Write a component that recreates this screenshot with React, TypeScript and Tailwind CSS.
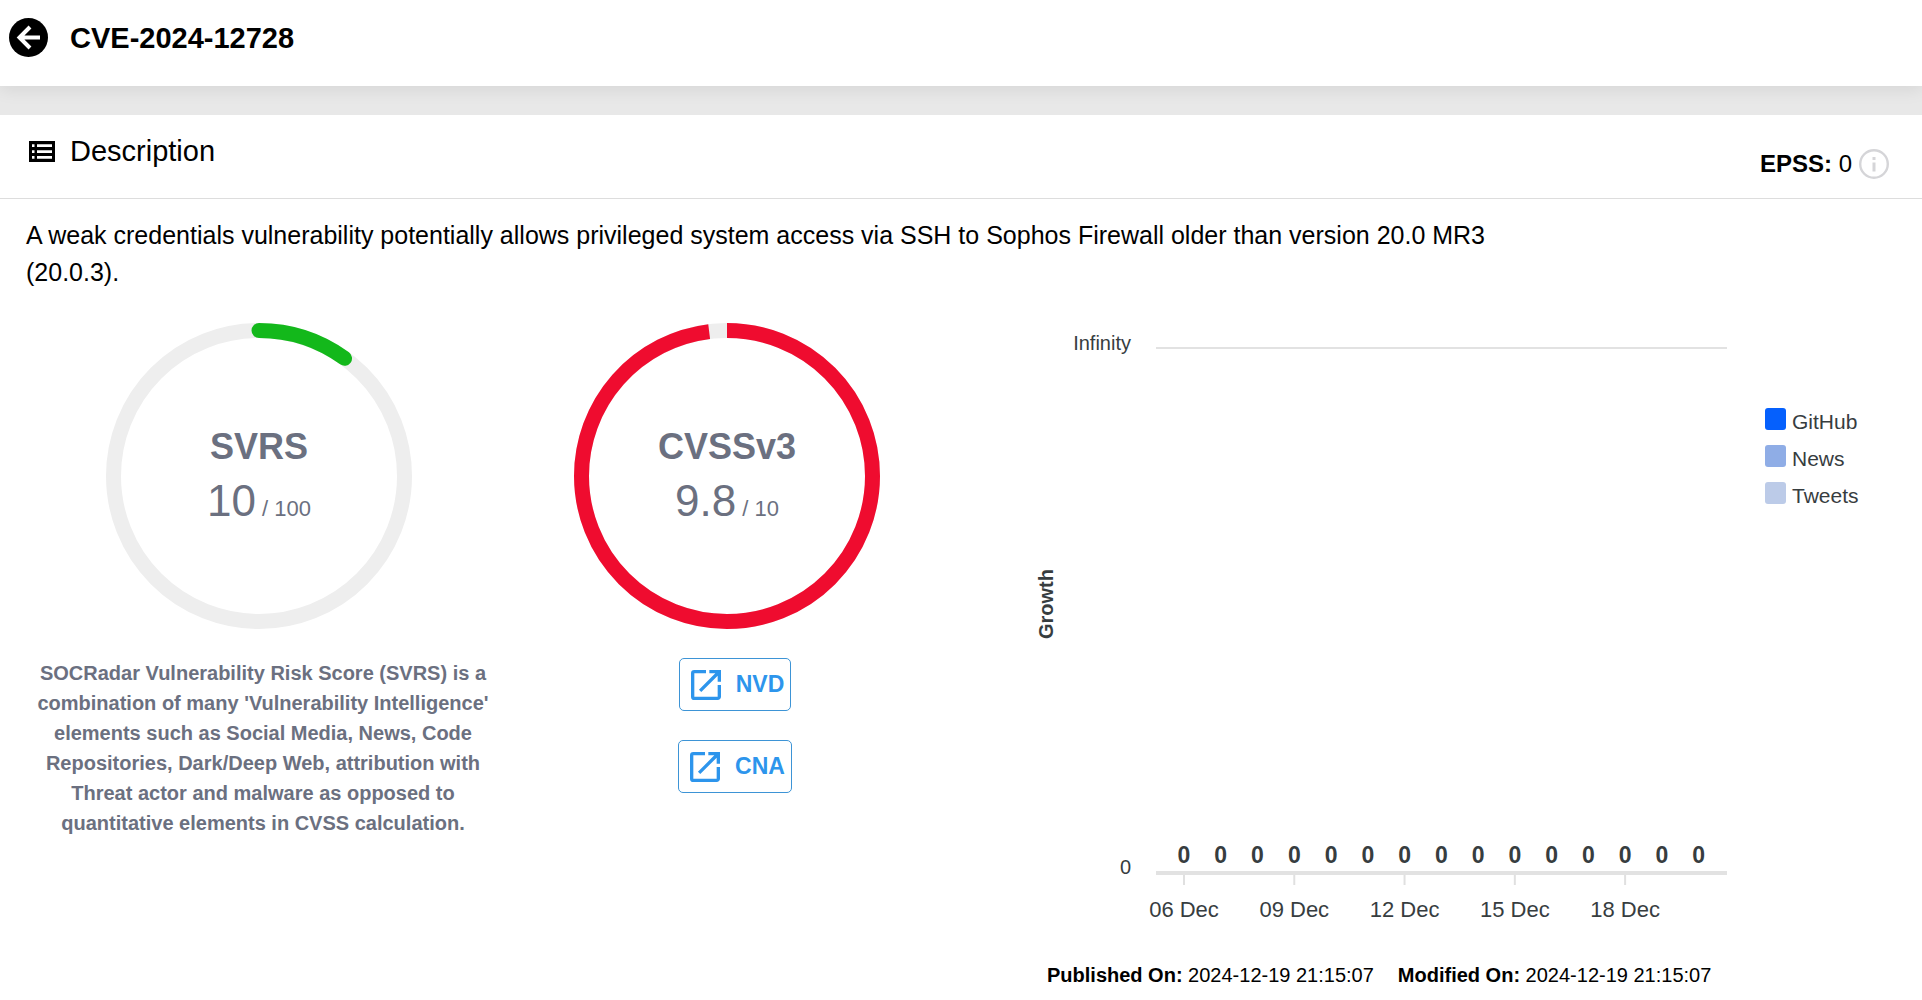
import type { ReactNode } from 'react';

import { MdOpenInNew } from 'react-icons/md';

interface ScoreGaugeProps {
    title: string;
    score: string;
    total: number;
    color: string;
    rounded?: boolean;
}

interface SourceLinkProps {
    href: string;
    children: ReactNode;
}

const RADIUS = 145.5;
const CIRCUMFERENCE = 2 * Math.PI * RADIUS;

const legend = [
    { label: 'GitHub', className: 'bg-[#0560fd]' },
    { label: 'News', className: 'bg-[#8fade6]' },
    { label: 'Tweets', className: 'bg-[#bccbe8]' },
];

const growth = Array.from({ length: 15 }, (_, i) => ({
    day: `${String(i + 6).padStart(2, '0')} Dec`,
    value: 0,
}));

const ScoreGauge = ({ title, score, total, color, rounded }: ScoreGaugeProps) => {
    const filled = (Number(score) / total) * CIRCUMFERENCE;

    return (
        <div className="grid place-items-center">
            <svg
                viewBox="0 0 306 306"
                className="col-start-1 row-start-1 size-[306px]"
                fill="none"
                strokeWidth="15"
            >
                <circle cx="153" cy="153" r={RADIUS} stroke="#eeeeee" />
                <circle
                    cx="153"
                    cy="153"
                    r={RADIUS}
                    stroke={color}
                    strokeLinecap={rounded ? 'round' : 'butt'}
                    strokeDasharray={`${filled} ${CIRCUMFERENCE}`}
                    transform="rotate(-90 153 153)"
                />
            </svg>
            <div className="col-start-1 row-start-1 pt-1 text-center text-[#6b7080]">
                <h3 className="text-[36px] leading-[54px] font-bold">{title}</h3>
                <p className="text-[44px] leading-[54px]">
                    {score}
                    <span className="text-[22px]"> / {total}</span>
                </p>
            </div>
        </div>
    );
};

const SourceLink = ({ href, children }: SourceLinkProps) => (
    <a
        href={href}
        className="flex h-[53px] items-center gap-2.5 rounded-[5px] border border-[#3d94d6] px-1.5 text-[23px] font-bold text-[#2d95ec]"
    >
        <MdOpenInNew className="size-10" />
        {children}
    </a>
);

const GrowthChart = () => (
    <svg
        viewBox="0 0 790 610"
        className="h-[610px] w-[790px]"
        fill="#373d3f"
        role="img"
        aria-label="Growth of mentions per day"
    >
        <text x="170" y="29" textAnchor="end" fontSize="20">
            Infinity
        </text>
        <text x="170" y="553" textAnchor="end" fontSize="20">
            0
        </text>
        <text
            transform="translate(92 283) rotate(-90)"
            textAnchor="middle"
            fontSize="20"
            fontWeight="700"
        >
            Growth
        </text>
        <rect x="195" y="26" width="571" height="2" fill="#e2e2e2" />
        <rect x="195" y="550" width="571" height="4" fill="#e2e2e2" />
        {growth.map((item, i) => {
            const x = 223 + i * 36.76;

            return (
                <g key={item.day} textAnchor="middle">
                    <text x={x} y="542" fontSize="23" fontWeight="700">
                        {item.value}
                    </text>
                    {i % 3 === 0 && (
                        <>
                            <path d={`M${x} 554v10`} stroke="#e0e0e0" strokeWidth="2" />
                            <text x={x} y="596" fontSize="22">
                                {item.day}
                            </text>
                        </>
                    )}
                </g>
            );
        })}
    </svg>
);

export default function App() {
    return (
        <div className="min-h-screen bg-[#e8e8e8] font-['Liberation_Sans',Arial,sans-serif] text-black">
            <header className="relative flex h-[86px] items-start gap-[22px] bg-white px-[9px] pt-[18px] shadow-[0_4px_16px_rgba(0,0,0,0.08)]">
                <button type="button" aria-label="Back" className="cursor-pointer">
                    <svg viewBox="0 0 39 39" className="size-[39px]" fill="none">
                        <circle cx="19.5" cy="19.5" r="19.5" fill="#000" />
                        <path d="M31 19.5H10.500M21 9L10.500 19.5 21 30" stroke="#fff" strokeWidth="4" />
                    </svg>
                </button>
                <h1 className="text-[29px] leading-10 font-bold">CVE-2024-12728</h1>
            </header>

            <main className="mt-[29px] min-h-[885px] bg-white">
                <div className="flex h-[84px] items-start justify-between border-b border-[#dddddd] pr-[33px] pl-[29px]">
                    <div className="flex items-center gap-[15px] pt-4">
                        <svg viewBox="0 0 26 21" className="h-[21px] w-[26px]">
                            <path
                                fillRule="evenodd"
                                d="M0 0h26v21H0zM3 3.300v2.700h2.500V3.300zM8 3.300v2.700h15V3.300zM3 9.200v2.700h2.500V9.200zM8 9.200v2.700h15V9.200zM3 15v2.700h2.500V15zM8 15v2.700h15V15z"
                            />
                        </svg>
                        <h2 className="text-[29px] leading-10">Description</h2>
                    </div>
                    <p className="flex items-center gap-[7px] pt-[29px] text-2xl leading-10">
                        <span>
                            <b>EPSS:</b> 0
                        </span>
                        <svg viewBox="0 0 30 30" className="size-[30px]" fill="none" stroke="#d5d5d8">
                            <circle cx="15" cy="15" r="13.800" strokeWidth="2.400" />
                            <path d="M15 8v3M15 13.500v9" strokeWidth="3" />
                        </svg>
                    </p>
                </div>

                <p className="max-w-[1540px] px-[26px] pt-[18px] text-[25px] leading-[37px]">
                    A weak credentials vulnerability potentially allows privileged system
                    access via SSH to Sophos Firewall older than version 20.0 MR3 (20.0.3).
                </p>

                <div className="grid grid-cols-[1fr_1fr_2fr] px-[25px] pt-[30px]">
                    <section className="flex flex-col items-center pt-0.5">
                        <ScoreGauge title="SVRS" score="10" total={100} color="#13b81b" rounded />
                        <p className="mt-[29px] ml-2 max-w-[456px] text-center text-[20px] leading-[30px] font-bold text-[#6b7080]">
                            SOCRadar Vulnerability Risk Score (SVRS) is a combination of many
                            'Vulnerability Intelligence' elements such as Social Media, News,
                            Code Repositories, Dark/Deep Web, attribution with Threat actor and
                            malware as opposed to quantitative elements in CVSS calculation.
                        </p>
                    </section>

                    <section className="flex flex-col items-center pt-0.5">
                        <ScoreGauge title="CVSSv3" score="9.8" total={10} color="#ef0c2f" />
                        <div className="mt-[29px] ml-4 flex flex-col items-center gap-[29px]">
                            <SourceLink href="#nvd">NVD</SourceLink>
                            <SourceLink href="#cna">CNA</SourceLink>
                        </div>
                    </section>

                    <section>
                        <div className="flex gap-3.5">
                            <GrowthChart />
                            <ul className="pt-[82px] text-[21px] leading-[37px] text-[#373d3f]">
                                {legend.map((item) => (
                                    <li key={item.label} className="flex items-center gap-1.5">
                                        <span className={`mb-1.5 h-[22px] w-[21px] rounded-[3px] ${item.className}`} />
                                        {item.label}
                                    </li>
                                ))}
                            </ul>
                        </div>
                        <div className="flex gap-6 pt-[29px] pl-[86px] text-[20px] leading-[30px]">
                            <p>
                                <b>Published On:</b> 2024-12-19 21:15:07
                            </p>
                            <p>
                                <b>Modified On:</b> 2024-12-19 21:15:07
                            </p>
                        </div>
                    </section>
                </div>
            </main>
        </div>
    );
}
